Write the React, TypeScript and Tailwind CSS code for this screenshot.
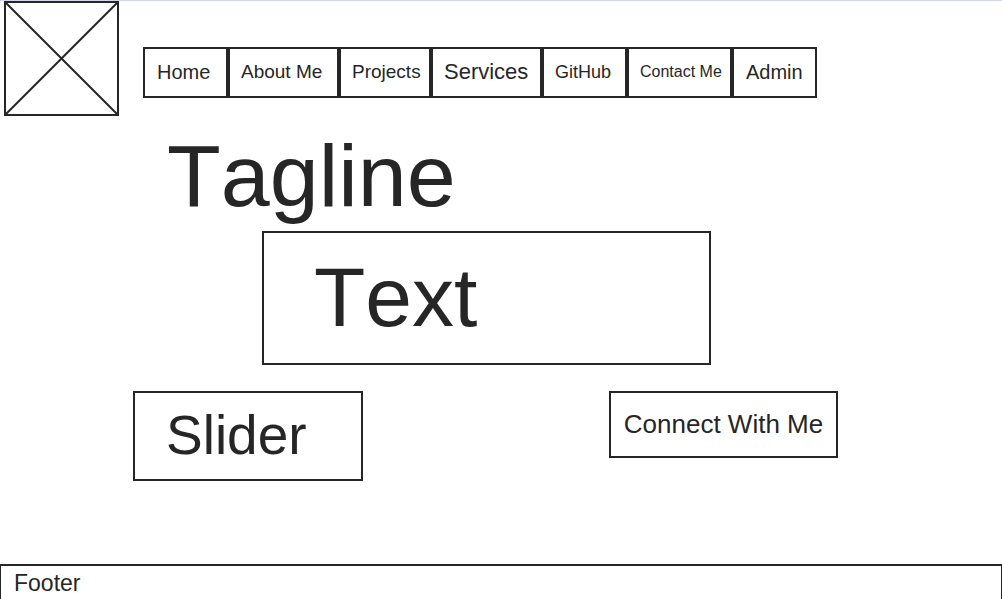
import React from "react";

type NavItem = { label: string; href: string; className: string };

const navItems: NavItem[] = [
  { label: "Home", href: "#home", className: "w-[85px] pl-3 text-[20px]" },
  { label: "About Me", href: "#about", className: "w-[111px] pl-[11px] text-[19px]" },
  { label: "Projects", href: "#projects", className: "w-[92px] pl-[11px] text-[19px]" },
  { label: "Services", href: "#services", className: "w-[111px] pl-[11px] text-[22px]" },
  { label: "GitHub", href: "#github", className: "w-[85px] pl-[11px] text-[18px]" },
  { label: "Contact Me", href: "#contact", className: "w-[105px] pl-[11px] text-[16px]" },
  { label: "Admin", href: "#admin", className: "w-[85px] pl-3 text-[20px]" },
];

function Logo() {
  return (
    <svg
      className="ml-1 size-[115px] shrink-0"
      viewBox="0 0 115 115"
      fill="none"
      stroke="#262626"
      strokeWidth="2"
      role="img"
      aria-label="Logo"
    >
      <rect x="1" y="1" width="113" height="113" />
      <path d="M1 1 114 114M114 1 1 114" />
    </svg>
  );
}

export default function App() {
  return (
    <div className="flex min-h-screen flex-col border-t border-[#cfdae5] bg-white font-['Liberation_Sans',Arial,sans-serif] text-[#262626] [font-kerning:none]">
      <header className="flex items-start">
        <Logo />
        <nav className="mt-[46px] ml-6 flex flex-wrap">
          {navItems.map((item) => (
            <a
              key={item.label}
              href={item.href}
              className={`flex h-[51px] items-center border-2 border-[#262626] pb-0.5 leading-6 whitespace-nowrap ${item.className}`}
            >
              {item.label}
            </a>
          ))}
        </nav>
      </header>

      <main className="pb-8">
        <h1 className="mt-4 ml-[167px] text-[88px] leading-none">Tagline</h1>
        <div className="mt-[11px] pl-[262px]">
          <section className="flex h-[134px] max-w-[449px] items-center border-2 border-[#262626] pb-0.5 pl-[50px]">
            <p className="text-[84px] leading-none">Text</p>
          </section>
        </div>
        <div className="mt-[26px] flex max-w-[838px] items-start justify-between pl-[133px]">
          <section className="flex h-[90px] w-[230px] items-center border-2 border-[#262626] pb-0.5 pl-[31px]">
            <h2 className="text-[55px] leading-none">Slider</h2>
          </section>
          <button
            type="button"
            className="h-[67px] w-[229px] border-2 border-[#262626] pb-0.5 text-[26px] leading-8 whitespace-nowrap"
          >
            Connect With Me
          </button>
        </div>
      </main>

      <footer className="mt-auto flex h-[35px] items-center border-x border-t-2 border-[#262626] pl-[13px] text-[23px] leading-8">
        Footer
      </footer>
    </div>
  );
}
